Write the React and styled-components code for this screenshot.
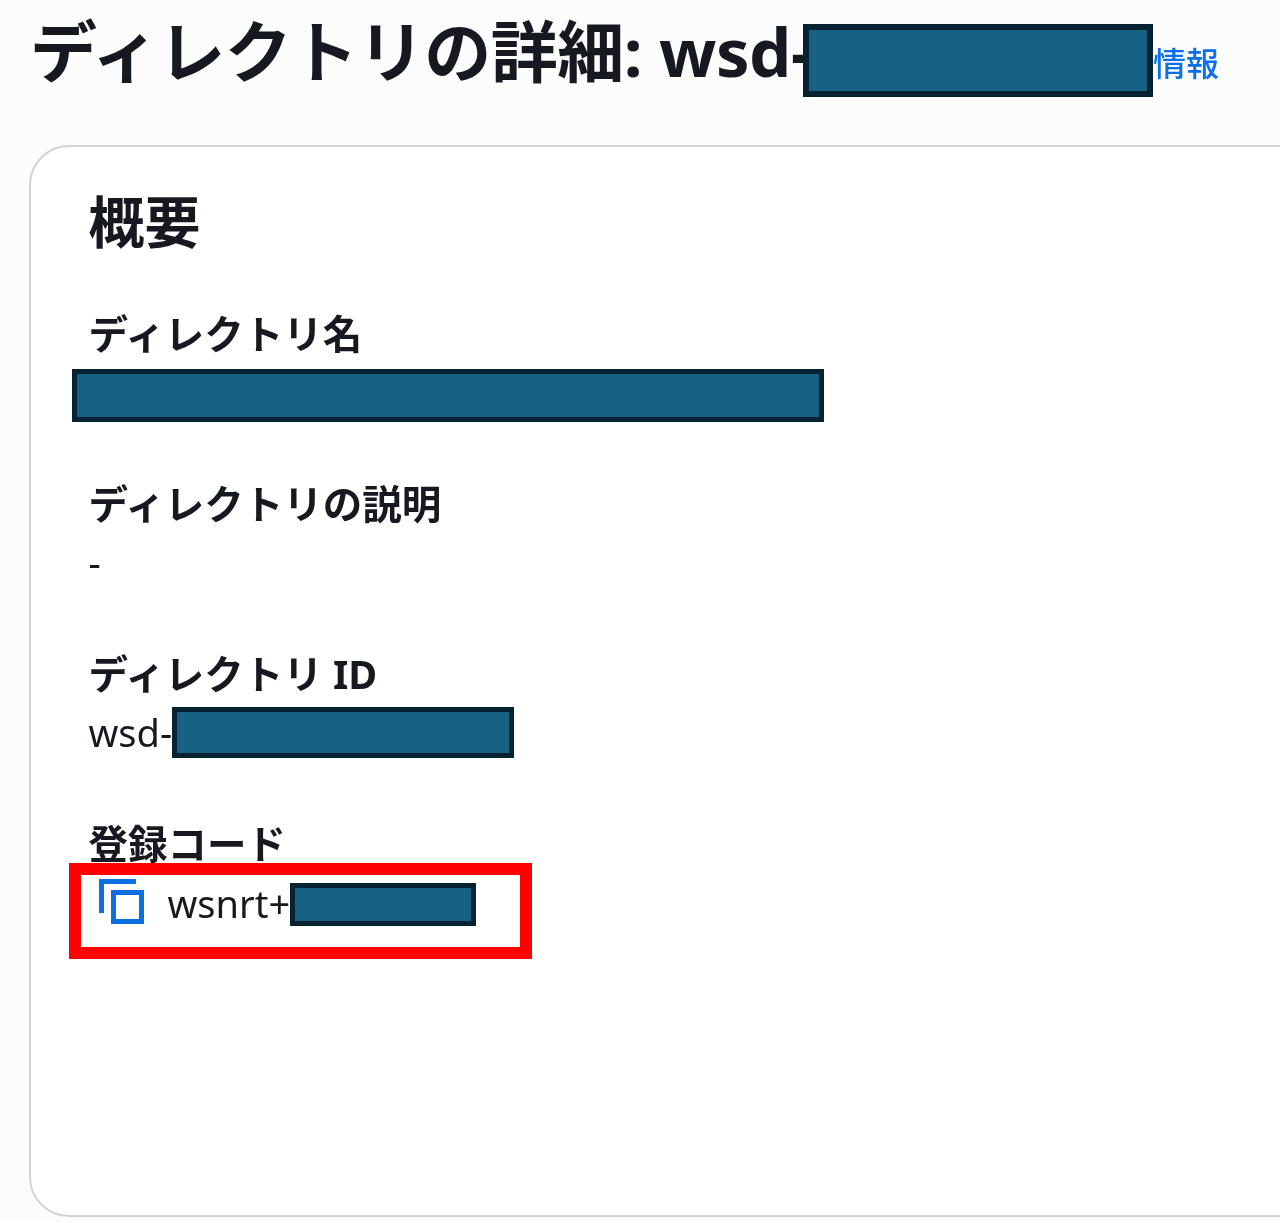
import styled, { createGlobalStyle } from "styled-components";

const GlobalStyle = createGlobalStyle`
    html, body {
        margin: 0;
        padding: 0;
        background: #fcfcfd;
    }
    body {
        font-family: "Noto Sans", "Noto Sans CJK JP", sans-serif;
        color: #16191f;
    }
`;

function App() {
    const sections = [
        { label: "ディレクトリ名", value: <NameBar /> },
        { label: "ディレクトリの説明", value: <Dash>-</Dash> },
        { label: "ディレクトリ ID", value: <IdValue>wsd-<IdBar /></IdValue> },
    ];

    return (
        <Page>
            <GlobalStyle />
            <Header>
                <Title>ディレクトリの詳細: wsd-</Title>
                <TitleBar />
                <InfoLink>情報</InfoLink>
            </Header>
            <Card>
                <CardTitle>概要</CardTitle>
                {sections.map((s) => (
                    <Section key={s.label}>
                        <Label>{s.label}</Label>
                        {s.value}
                    </Section>
                ))}
                <Section>
                    <Label>登録コード</Label>
                    <Highlight>
                        <CopyIcon viewBox="0 0 50 50">
                            <path d="M4.5 36V4.5H39" />
                            <rect x="16.5" y="15.5" width="28" height="29" />
                        </CopyIcon>
                        <CodeText>wsnrt+</CodeText>
                        <CodeBar />
                    </Highlight>
                </Section>
            </Card>
        </Page>
    );
}

export default App;

const Page = styled.div`
    width: 1280px;
    height: 1222px;
    overflow: hidden;
    filter: blur(0.4px);
`;

const Header = styled.div`
    display: flex;
    align-items: flex-start;
    height: 145px;
    padding-left: 30px;
    box-sizing: border-box;
`;

const Title = styled.h1`
    margin: 0;
    font-size: 67px;
    line-height: 102px;
    font-weight: 700;
    white-space: nowrap;
    letter-spacing: -0.5px;
    width: 773px;
    flex: none;
    overflow: hidden;
`;

const Redaction = styled.div`
    box-sizing: border-box;
    background: #176183;
    border: 6px solid #062233;
    flex: none;
`;

const TitleBar = styled(Redaction)`
    width: 350px;
    height: 73px;
    margin-top: 24px;
`;

const InfoLink = styled.a`
    font-size: 33px;
    line-height: 40px;
    font-weight: 500;
    color: #0a6fe8;
    margin-top: 44px;
    white-space: nowrap;
`;

const Card = styled.div`
    box-sizing: border-box;
    width: 1400px;
    height: 1072px;
    margin-left: 29px;
    padding: 37px 0 0 57.5px;
    background: #fff;
    border: 2.5px solid #d2d2da;
    border-radius: 40px;
`;

const CardTitle = styled.h2`
    margin: 0;
    height: 130px;
    font-size: 56px;
    line-height: 74px;
    font-weight: 700;
`;

const Section = styled.div`
    height: 170px;
`;

const Label = styled.div`
    font-size: 39.5px;
    line-height: 40px;
    font-weight: 700;
    white-space: nowrap;
`;

const NameBar = styled(Redaction)`
    width: 752px;
    height: 53px;
    margin: 15px 0 0 -17px;
    border-width: 5px;
`;

const Dash = styled.div`
    font-size: 38px;
    line-height: 50px;
    margin-top: 13px;
`;

const IdValue = styled.div`
    display: flex;
    align-items: flex-start;
    font-size: 38px;
    line-height: 50px;
    margin-top: 13px;
`;

const IdBar = styled(Redaction)`
    width: 342px;
    height: 51px;
    border-width: 5px;
    margin-top: 0;
`;

const Highlight = styled.div`
    box-sizing: border-box;
    display: flex;
    align-items: flex-start;
    width: 463px;
    height: 96px;
    margin: -1px 0 0 -20px;
    border: 12px solid #ff0000;
    background: #fff;
`;

const CopyIcon = styled.svg`
    width: 50px;
    height: 50px;
    margin: 2px 0 0 16px;
    flex: none;
    fill: none;
    stroke: #0a6fe0;
    stroke-width: 5;
`;

const CodeText = styled.span`
    font-size: 38px;
    line-height: 50px;
    margin: 3px 0 0 21px;
    width: 122px;
    flex: none;
    white-space: nowrap;
    overflow: hidden;
`;

const CodeBar = styled(Redaction)`
    width: 186px;
    height: 43px;
    border-width: 5px;
    margin-top: 8px;
`;
